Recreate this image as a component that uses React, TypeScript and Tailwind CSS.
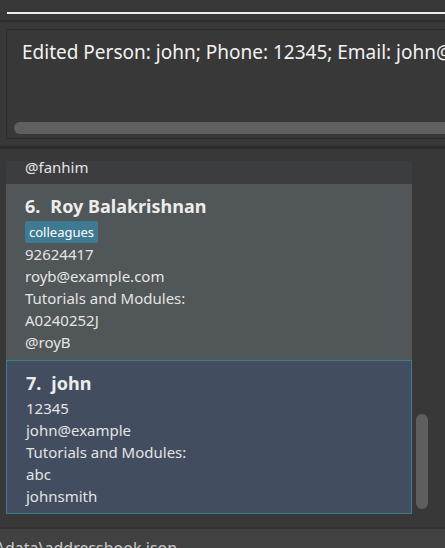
import React from "react";

type Person = {
  index: number;
  name: string;
  tags: string[];
  phone: string;
  email: string;
  modules: string[];
  handle: string;
};

const PEOPLE: Person[] = [
  {
    index: 6,
    name: "Roy Balakrishnan",
    tags: ["colleagues"],
    phone: "92624417",
    email: "royb@example.com",
    modules: ["A0240252J"],
    handle: "@royB",
  },
  {
    index: 7,
    name: "john",
    tags: [],
    phone: "12345",
    email: "john@example",
    modules: ["abc"],
    handle: "johnsmith",
  },
];

function PersonCard({ person, selected }: { person: Person; selected: boolean }) {
  return (
    <div
      className={`pl-[19px] pr-2 text-[15px] leading-[22px] text-[#e4e4e4] ${
        selected
          ? "bg-[#424d5f] border border-[#3b7c8e] pt-[9px] pb-[6px]"
          : "bg-[#515658] pt-[9px] pb-[7px]"
      }`}
    >
      <div className="flex items-center gap-[10px] text-[18px] leading-[26px] font-bold text-[#ececec] mb-[1px]">
        <span>{person.index}.</span>
        <span>{person.name}</span>
      </div>
      {person.tags.length > 0 && (
        <div className="flex gap-1 mt-[2px]">
          {person.tags.map((t) => (
            <span
              key={t}
              className="bg-[#3e7a91] text-white text-[13px] leading-[22px] px-[4px] rounded-[2px]"
            >
              {t}
            </span>
          ))}
        </div>
      )}
      <div>{person.phone}</div>
      <div>{person.email}</div>
      <div>Tutorials and Modules:</div>
      {person.modules.map((m) => (
        <div key={m}>{m}</div>
      ))}
      <div>{person.handle}</div>
    </div>
  );
}

export default function App() {
  return (
    <div
      className="w-[445px] h-[548px] bg-[#383838] flex flex-col overflow-hidden"
      style={{ fontFamily: '"Noto Sans", "Open Sans", sans-serif' }}
    >
      {/* Command box */}
      <div className="h-[20px] pt-[12px] pl-[7px]">
        <div className="h-[2px] bg-[#ededed]" />
      </div>
      <div className="h-[2px] bg-[#2c2c2c]" />

      {/* Result display */}
      <div className="pt-[7px] pl-[6px]">
        <div className="h-[110px] border border-r-0 border-[#2a2a2a] flex flex-col">
          <div className="pl-[15px] pt-[10px] text-[19px] leading-[24px] text-[#f2f2f2] whitespace-nowrap overflow-hidden flex-1">
            Edited Person: john; Phone: 12345; Email: john@example
          </div>
          <div className="pl-[7px] pb-[4px]">
            <div className="h-[12px] bg-[#5f5f5f] rounded-l-[6px]" />
          </div>
        </div>
      </div>

      <div className="mt-[7px] h-[3px] bg-[#2c2c2c]" />

      {/* Person list */}
      <div className="flex-1 flex relative overflow-hidden pt-[12px]">
        <div className="ml-[6px] w-[406px] flex flex-col">
          <div className="bg-[#3c3d3f] h-[23px] pl-[19px] text-[15px] leading-[22px] text-[#e4e4e4] overflow-hidden">
            <div className="-mt-[5px]">@fanhim</div>
          </div>
          {PEOPLE.map((p) => (
            <PersonCard key={p.index} person={p} selected={p.index === 7} />
          ))}
        </div>
        <div className="absolute left-[416px] top-[265px] w-[12px] h-[95px] rounded-[6px] bg-[#5e5e5e]" />
      </div>

      {/* Status bar */}
      <div className="h-[21px] bg-[#414141] border-t-2 border-[#333333] overflow-hidden">
        <div className="text-[16px] leading-[20px] text-[#c9c9c9] pt-[9px] -ml-[1px] whitespace-nowrap">
          \data\addressbook.json
        </div>
      </div>
    </div>
  );
}
